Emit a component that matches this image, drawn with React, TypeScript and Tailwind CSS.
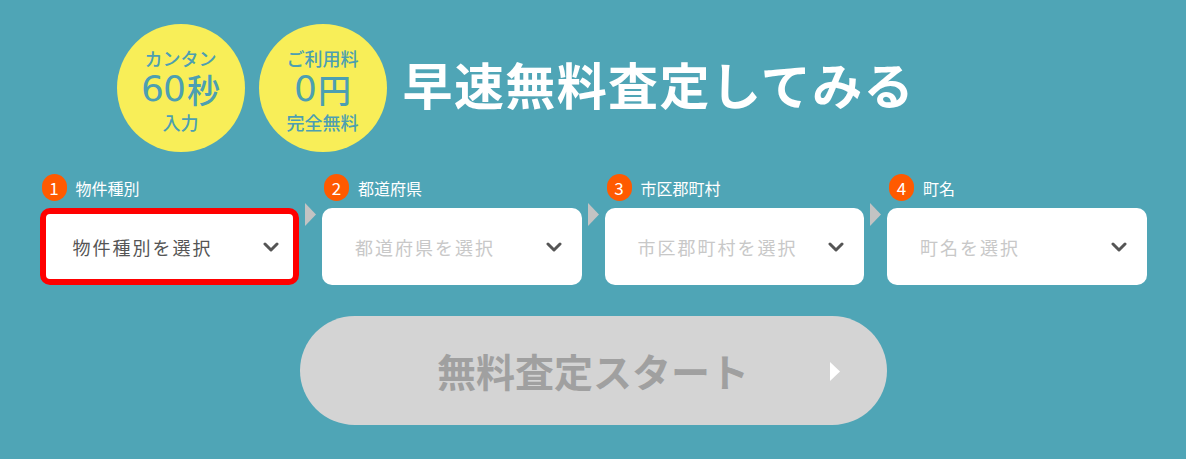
import React from "react";

const jp = { fontFamily: '"Noto Sans CJK JP", "Noto Sans", sans-serif' };

const steps = [
  { no: "1", label: "物件種別", placeholder: "物件種別を選択", active: true },
  { no: "2", label: "都道府県", placeholder: "都道府県を選択", active: false },
  { no: "3", label: "市区郡町村", placeholder: "市区郡町村を選択", active: false },
  { no: "4", label: "町名", placeholder: "町名を選択", active: false },
];

function Badge({ top, num, unit, bottom }: { top: string; num: string; unit: string; bottom: string }) {
  return (
    <div className="w-[128px] h-[128px] rounded-full bg-[#f8ee58] flex flex-col items-center pt-[24px] text-[#4c9fb2]">
      <span className="text-[18px] leading-[20px] font-medium">{top}</span>
      <div className="mt-[4px] h-[34px] flex items-center">
        <span
          className="inline-block leading-[34px] text-[36px] tracking-[-1px]"
          style={{ fontFamily: '"DejaVu Sans", sans-serif' }}
        >
          {num}
        </span>
        <span className="inline-block leading-[34px] text-[33px] font-medium ml-[2px]">{unit}</span>
      </div>
      <span className="mt-[6px] text-[18px] leading-[20px] font-medium">{bottom}</span>
    </div>
  );
}

function Chevron() {
  return (
    <svg width="16" height="10" viewBox="0 0 16 10" className="shrink-0">
      <path d="M2 2 L8 8 L14 2" fill="none" stroke="#555" strokeWidth="3" strokeLinecap="round" strokeLinejoin="round" />
    </svg>
  );
}

function Arrow() {
  return (
    <div className="w-[23px] shrink-0 flex justify-center pt-[29px]">
      <svg width="11" height="23" viewBox="0 0 11 23">
        <path d="M0 0 L11 11.5 L0 23 Z" fill="#c3c3c3" />
      </svg>
    </div>
  );
}

export default function App() {
  return (
    <div className="w-[1186px] h-[459px] bg-[#4fa5b6] overflow-hidden" style={jp}>
      <div className="w-[1107px] mx-auto pt-[24px]">
        <div className="flex items-center pl-[77px] gap-[14px]">
          <Badge top="カンタン" num="60" unit="秒" bottom="入力" />
          <Badge top="ご利用料" num="0" unit="円" bottom="完全無料" />
          <h1 className="ml-[2px] text-white text-[50px] font-bold tracking-[1.4px] leading-none pb-[10px]">
            早速無料査定してみる
          </h1>
        </div>

        <div className="flex mt-[22px]">
          {steps.map((s, i) => (
            <React.Fragment key={s.no}>
              {i > 0 && <Arrow />}
              <div className="flex-1 flex flex-col">
                <div className="flex items-center h-[27px] pl-[2px]">
                  <span className="w-[25px] h-[27px] rounded-full bg-[#ff5a00] text-white text-[17px] flex items-center justify-center leading-none">
                    {s.no}
                  </span>
                  <span className="ml-[9px] text-white text-[16px] leading-none">{s.label}</span>
                </div>
                <div
                  className={
                    "mt-[7px] h-[77px] rounded-[10px] bg-white flex items-center justify-between " +
                    (s.active ? "border-[6px] border-[#ff0000] pl-[27px] pr-[14px]" : "pl-[33px] pr-[20px]")
                  }
                >
                  <span
                    className={
                      "text-[18px] tracking-[2px] leading-none " +
                      (s.active ? "text-[#555555]" : "text-[#c8c8c8]")
                    }
                  >
                    {s.placeholder}
                  </span>
                  <Chevron />
                </div>
              </div>
            </React.Fragment>
          ))}
        </div>

        <div className="flex justify-center mt-[31px]">
          <button className="relative w-[587px] h-[109px] rounded-full bg-[#d4d4d4] flex items-center justify-center">
            <span className="text-[39px] font-bold text-[#a0a0a0] leading-none">無料査定スタート</span>
            <svg width="10" height="19" viewBox="0 0 10 19" className="absolute right-[47px] top-[46px]">
              <path d="M0 0 L10 9.5 L0 19 Z" fill="#ffffff" />
            </svg>
          </button>
        </div>
      </div>
    </div>
  );
}
